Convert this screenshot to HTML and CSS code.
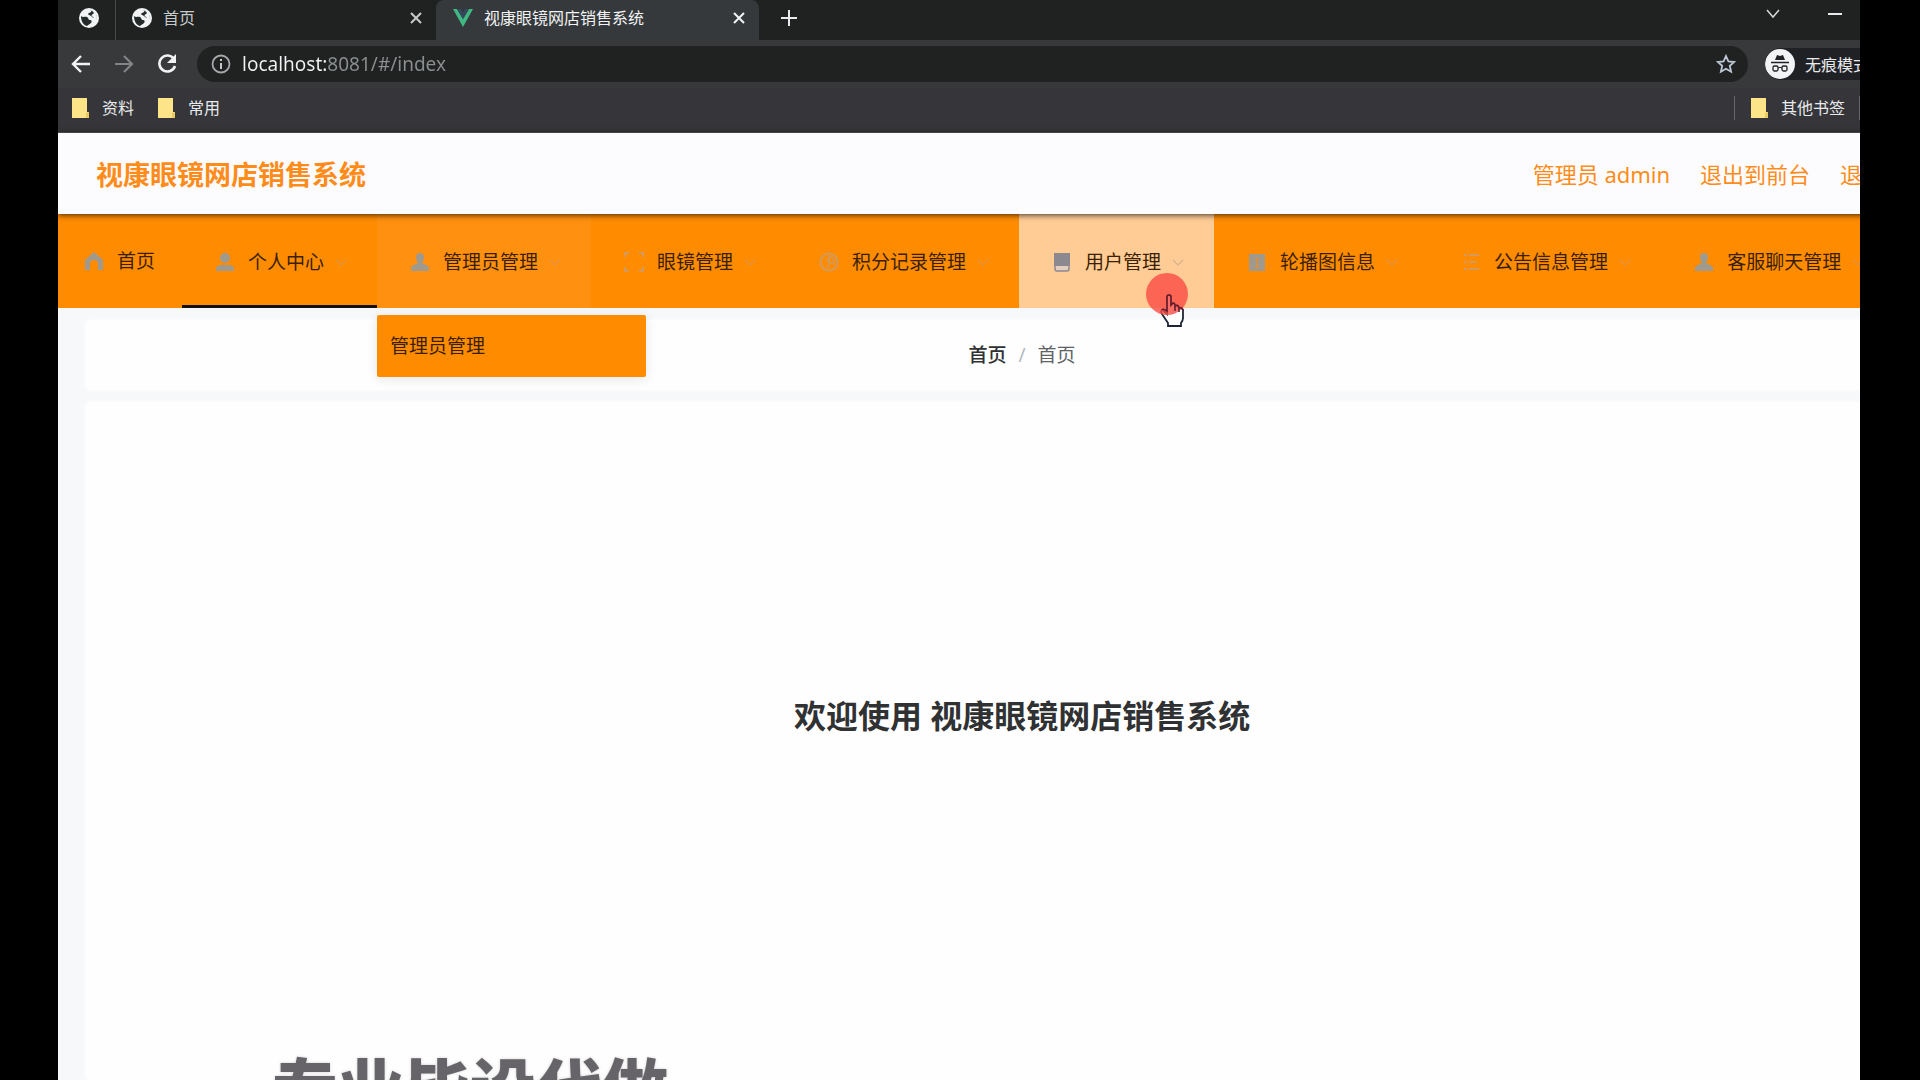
FILE: index.html
```html
<!DOCTYPE html>
<html lang="zh-CN">
<head>
  <meta charset="UTF-8" />
  <meta name="viewport" content="width=device-width, initial-scale=1" />
  <title>视康眼镜网店销售系统</title>
  <link rel="stylesheet" href="styles.css">
</head>
<body>
<!-- shared icons -->
<svg class="sprite" aria-hidden="true">
  <symbol id="globe" viewBox="0 0 20 20">
    <circle cx="10" cy="10" r="10" fill="#f1f3f4"/>
    <path d="M2 8c2 2 4 0 6 1s1 3 3 3 2 2 1 3-3 2-4 3c-4-1-6-5-6-10zM10 2c2 0 3 1 2 2s-3 1-3 2 2 1 3 2 2 2 4 2l2 1c0-5-3-9-8-9z" fill="#24292a"/>
    <path d="M11 2c4 0 7 3 7 8l-2 4c-1-2 0-4-2-5s-2-2 0-3 0-3-3-4z" fill="#f1f3f4"/>
  </symbol>
  <symbol id="close" viewBox="0 0 12 12"><path d="M1 1l10 10M11 1L1 11" fill="none" stroke="currentColor" stroke-width="2"/></symbol>
  <symbol id="folder" viewBox="0 0 17 20"><path d="M0 0h15v14h2v6H0z" fill="#fde488"/><path d="M14 15l3-1v6h-3z" fill="#eacb62"/></symbol>
  <symbol id="user" viewBox="0 0 20 20"><circle cx="10" cy="6" r="5" fill="currentColor"/><path d="M1 19c-1-4 2-6 6-6h6c4 0 7 2 6 6z" fill="currentColor"/></symbol>
  <symbol id="person" viewBox="0 0 20 20"><path d="M10 1c3 0 4 2 4 4 0 3-1 5-2 6l6 3c1 1 1 3 1 5H1c0-2 0-4 1-5l6-3C7 10 6 8 6 5c0-2 1-4 4-4z" fill="currentColor"/></symbol>
  <symbol id="down" viewBox="0 0 12 12"><path d="M1 4l5 5 5-5" fill="none" stroke="currentColor" stroke-width="1.2"/></symbol>
</svg>

<div class="screen">
  <div class="browser">
    <div class="tabs">
      <button class="tab pinned" aria-label="固定标签页"><svg class="favicon"><use href="#globe"/></svg></button>
      <button class="tab"><svg class="favicon"><use href="#globe"/></svg><span>首页</span><svg class="close"><use href="#close"/></svg></button>
      <button class="tab active">
        <svg class="favicon" viewBox="0 0 20 20"><path d="M0 1h4l6 10 6-10h4L10 19z" fill="#41b883"/><path d="M4 1h4l2 4 2-4h4l-6 10z" fill="#35495e"/></svg>
        <span>视康眼镜网店销售系统</span><svg class="close"><use href="#close"/></svg>
      </button>
      <button class="icon-btn new-tab" aria-label="新标签页"><svg width="16" height="16" viewBox="0 0 16 16"><path d="M8 0v16M0 8h16" stroke="#e8eaed" stroke-width="2"/></svg></button>
      <div class="window-btns">
        <button class="icon-btn" aria-label="搜索标签页"><svg width="14" height="10" viewBox="0 0 14 10"><path d="M1 1l6 7 6-7" fill="none" stroke="#d5d7d9" stroke-width="1.5"/></svg></button>
        <button class="icon-btn" aria-label="最小化"><svg width="14" height="10" viewBox="0 0 14 10"><path d="M0 5h14" stroke="#e8eaed" stroke-width="2"/></svg></button>
      </div>
    </div>

    <div class="toolbar">
      <div class="history">
        <button class="icon-btn" aria-label="后退"><svg width="20" height="20" viewBox="0 0 20 20"><path d="M19 10H2M10 2l-8 8 8 8" fill="none" stroke="#f1f3f4" stroke-width="2.4"/></svg></button>
        <button class="icon-btn" aria-label="前进"><svg width="20" height="20" viewBox="0 0 20 20"><path d="M1 10h17M10 2l8 8-8 8" fill="none" stroke="#818386" stroke-width="2.2"/></svg></button>
        <button class="icon-btn" aria-label="刷新"><svg width="20" height="20" viewBox="0 0 20 20"><path d="M17 5a8 8 0 1 0 1 7" fill="none" stroke="#f1f3f4" stroke-width="2.6"/><path d="M19 0v9h-9z" fill="#f1f3f4"/></svg></button>
      </div>
      <div class="omnibox">
        <svg width="20" height="20" viewBox="0 0 20 20"><circle cx="10" cy="10" r="8.5" fill="none" stroke="#a5a8ab" stroke-width="1.8"/><path d="M10 5v2M10 9v6" stroke="#c5c7c9" stroke-width="2"/></svg>
        <input class="url" type="text" aria-label="地址" value="localhost:8081/#/index">
        <button class="icon-btn" aria-label="收藏"><svg width="20" height="20" viewBox="0 0 20 20"><path d="M10 2l2.4 5.4 5.8.6-4.4 3.9 1.3 5.8L10 14.7l-5.1 3 1.3-5.8L1.8 8l5.8-.6z" fill="none" stroke="#bcc7d6" stroke-width="1.8"/></svg></button>
      </div>
      <div class="incognito">
        <svg width="30" height="30" viewBox="0 0 30 30"><circle cx="15" cy="15" r="15" fill="#f1f3f4"/><path d="M10 11l2-5 3 1 3-1 2 5z" fill="#202124"/><path d="M6 13.5h18" stroke="#202124" stroke-width="1.5"/><rect x="8" y="17" width="5" height="5" rx="1.5" fill="none" stroke="#202124" stroke-width="1.3"/><rect x="17" y="17" width="5" height="5" rx="1.5" fill="none" stroke="#202124" stroke-width="1.3"/><path d="M13 19q2-1.5 4 0" fill="none" stroke="#202124"/></svg>
        <span>无痕模式</span>
      </div>
    </div>

    <div class="bookmarks">
      <button class="bookmark"><svg class="folder"><use href="#folder"/></svg>资料</button>
      <button class="bookmark"><svg class="folder"><use href="#folder"/></svg>常用</button>
      <div class="other">
        <button class="bookmark"><svg class="folder"><use href="#folder"/></svg>其他书签</button>
      </div>
    </div>
  </div>

  <div class="page">
    <header class="header">
      <h1>视康眼镜网店销售系统</h1>
      <div class="user-links">
        <span>管理员 admin</span>
        <a href="#">退出到前台</a>
        <a href="#">退出登录</a>
      </div>
    </header>

    <nav class="menu">
      <div class="menu-item home"><a href="#"><svg class="icon" viewBox="0 0 20 20"><path d="M10 1l9 8v10h-5v-6a4 4 0 0 0-8 0v6H1V9z" fill="currentColor"/></svg>首页</a></div>
      <div class="menu-item active"><a href="#"><svg class="icon"><use href="#user"/></svg>个人中心<svg class="arrow"><use href="#down"/></svg></a></div>
      <div class="menu-item open">
        <a href="#"><svg class="icon"><use href="#person"/></svg>管理员管理<svg class="arrow"><use href="#down"/></svg></a>
        <div class="submenu"><a href="#">管理员管理</a></div>
      </div>
      <div class="menu-item"><a href="#"><svg class="icon faint" viewBox="0 0 20 20"><path d="M1 5V1h4M15 1h4v4M19 15v4h-4M5 19H1v-4" fill="none" stroke="currentColor" stroke-width="2"/></svg>眼镜管理<svg class="arrow"><use href="#down"/></svg></a></div>
      <div class="menu-item"><a href="#"><svg class="icon faint" viewBox="0 0 20 20"><circle cx="10" cy="10" r="8.5" fill="none" stroke="currentColor" stroke-width="2"/><path d="M10 10V4a6 6 0 0 1 5 8zM7 7l3 3-1 6" fill="none" stroke="currentColor" stroke-width="1.5"/></svg>积分记录管理<svg class="arrow"><use href="#down"/></svg></a></div>
      <div class="menu-item hover"><a href="#"><svg class="icon" viewBox="0 0 20 20"><path d="M2 1h16v13H2z" fill="currentColor"/><path d="M3 14v3q0 2 2 2h10q2 0 2-2v-3" fill="#e2cdbf" stroke="currentColor" stroke-width="1.5"/></svg>用户管理<svg class="arrow"><use href="#down"/></svg></a></div>
      <div class="menu-item"><a href="#"><svg class="icon" viewBox="0 0 20 20"><path d="M2 2h16v17H2z" fill="currentColor"/><path d="M8 7h4M10 7v8M8 15h4" stroke="#dc913b" stroke-width="1.5"/></svg>轮播图信息<svg class="arrow"><use href="#down"/></svg></a></div>
      <div class="menu-item"><a href="#"><svg class="icon faint" viewBox="0 0 20 20"><path d="M3 3h3M8 3h10M3 10h3M8 10h8M3 17h3M8 17h10" stroke="currentColor" stroke-width="2"/></svg>公告信息管理<svg class="arrow"><use href="#down"/></svg></a></div>
      <div class="menu-item"><a href="#"><svg class="icon"><use href="#person"/></svg>客服聊天管理<svg class="arrow"><use href="#down"/></svg></a></div>
    </nav>

    <main class="content">
      <div class="card breadcrumb">
        <a href="#">首页</a><span class="sep">/</span><span>首页</span>
      </div>
      <div class="card welcome">
        <h2>欢迎使用 视康眼镜网店销售系统</h2>
      </div>
    </main>
  </div>

  <div class="caption">专业毕设代做</div>
  <svg class="pointer" viewBox="0 0 50 56">
    <path d="M22 25q0-2 2-2t2 2v8l2-2q2 0 2 3 3-2 4 2 3-1 4 2v8q0 3-2 5v3H23v-3l-6-9q-2-4 1-4l4 4z" fill="#fff" stroke="#1c2536" stroke-width="1.8"/>
    <circle cx="22" cy="22" r="21" fill="#fb4a42" fill-opacity=".8"/>
    <path d="M17 38q0-2 5 1V25q0-2 2-2t2 2v8l2-2q2 0 2 3 3-2 4 2 3-1 4 2M30 34v5M34 36v4" fill="none" stroke="#641f2c" stroke-width="1.6"/>
  </svg>
</div>
</body>
</html>
```
FILE: styles.css
```css
* { box-sizing: border-box; }

body {
  margin: 0; padding: 0 60px 0 58px; background: #000;
  font-family: "Noto Sans", "Noto Sans CJK SC", sans-serif;
}

button {
  border: none; background: none; padding: 0; margin: 0;
  font-family: inherit; font-size: 16px; line-height: 24px;
  color: inherit; cursor: pointer;
}

a { color: inherit; text-decoration: none; }
svg { flex: none; display: block; }
.sprite { display: none; }

.screen {
  position: relative; height: 100vh; overflow: hidden;
  display: flex; flex-direction: column;
  background: #f7f8fa;
}

/* browser window */
.browser { background: #36363a; color: #e8eaed; }

.tabs { display: flex; height: 40px; background: #1f2221; }

.tab {
  display: flex; align-items: center; gap: 11px;
  width: 320px; height: 40px; padding: 0 14px 5px 16px;
  white-space: nowrap; color: #c8cacb;
}
.tab.pinned { width: 58px; padding-left: 21px; border-right: 1px solid #464a4a; }
.tab.active {
  width: 323px; padding-left: 17px; background: #36393b; color: #f1f3f4;
  border-radius: 8px 8px 0 0;
}
.favicon { width: 20px; height: 20px; }
.close { width: 12px; height: 12px; margin-left: auto; }

.icon-btn { display: flex; align-items: center; justify-content: center; }
.new-tab { padding: 0 22px 5px; }
.window-btns { display: flex; gap: 48px; margin-left: auto; padding: 0 18px 12px 0; }

.toolbar {
  display: flex; align-items: center;
  height: 48px; background: #37393b;
}
.history { display: flex; gap: 23px; padding: 0 20px 0 13px; }
.omnibox {
  flex: 1; display: flex; align-items: center; gap: 11px;
  height: 36px; padding: 0 12px 0 14px;
  border-radius: 18px; background: #202222;
}
.url {
  flex: 1; min-width: 0; height: 36px; padding: 0; border: none; outline: none;
  font-family: "Noto Sans", "Open Sans", sans-serif; font-size: 19px;
  background: linear-gradient(90deg, #f1f3f4 84px, #8c8f91 84px);
  -webkit-background-clip: text; background-clip: text;
  -webkit-text-fill-color: transparent;
}
.incognito {
  display: flex; align-items: center; gap: 10px;
  width: 95px; height: 32px; margin-left: 17px;
  border-radius: 16px 0 0 16px; background: #202124;
  font-size: 16px; white-space: nowrap; overflow: hidden;
}

.bookmarks {
  display: flex; align-items: center; gap: 24px;
  height: 45px; padding-left: 14px; padding-bottom: 4px;
  border-bottom: 1px solid #5a5a5e;
}
.bookmark { display: flex; align-items: center; gap: 13px; }
.folder { width: 17px; height: 20px; }
.other {
  margin-left: auto; padding: 0 14px 0 16px;
  border-left: 1px solid #66666a; border-right: 1px solid #66666a;
}

/* admin page, a little wider than the visible window */
.page { flex: 1; display: flex; flex-direction: column; width: 107%; }

.header {
  position: relative; z-index: 1;
  display: flex; align-items: center; justify-content: space-between;
  height: 81px; padding: 0 58px 0 38px;
  background: #fcfcfe; color: #ff8c1a;
  box-shadow: 0 1px 6px rgba(0,0,0,0.75);
}
.header h1 { margin: 0; padding-top: 2px; font-size: 27px; line-height: 40px; }
.user-links { display: flex; gap: 30px; font-size: 22px; line-height: 32px; }

.menu { display: flex; background: #ff8c00; color: #3a1f00; }
.menu-item { position: relative; flex: none; }
.menu-item > a {
  display: flex; align-items: center;
  height: 94px; padding: 2px 30px 0 33px;
  font-size: 19px; line-height: 28px;
}
.menu-item.home > a { padding: 0 27px 0 26px; }
.menu-item.active > a { border-bottom: 3px solid #111; padding-top: 5px; }
.menu-item.open > a { background: #ff9010; }
.menu-item.hover > a { background: #ffcc96; }
.icon { width: 20px; height: 20px; margin-right: 13px; color: #a09a8e; }
.icon.faint { color: #d39a5c; }
.arrow { width: 12px; height: 12px; margin-left: 11px; color: #e09448; }
.hover .icon { color: #8c8890; }
.hover .arrow { color: #d4b08c; }

.submenu {
  position: absolute; top: 101px; left: 0; z-index: 2;
  width: 269px; padding: 17px 13px;
  background: #ff8c00; border-radius: 2px;
  font-size: 19px; line-height: 28px;
  box-shadow: 0 2px 12px rgba(0,0,0,0.1);
}

.content {
  flex: 1; display: flex; flex-direction: column; gap: 12px;
  padding: 12px 27px 0;
}
.card {
  background: #fefefe; border-radius: 6px;
  box-shadow: 0 0 6px rgba(255,255,255,0.8);
}
.breadcrumb {
  display: flex; align-items: center; justify-content: center;
  height: 70px; font-size: 19px; line-height: 28px; color: #606266;
}
.breadcrumb a { font-weight: 500; color: #303133; }
.sep { margin: 0 12px; color: #b4b8c0; }
.welcome { flex: 1; padding-top: 290px; text-align: center; }
.welcome h2 { margin: 0; font-size: 32px; line-height: 48px; color: #303133; }

/* recording overlays */
.caption {
  position: absolute; left: 214px; bottom: -44px;
  font-size: 66px; line-height: 72px; font-weight: 900;
  color: #666468; white-space: nowrap;
  text-shadow: 0 0 3px #ccc;
}
.pointer {
  position: absolute; left: 1087px; top: 272px; z-index: 3;
  width: 50px; height: 56px;
}
```
